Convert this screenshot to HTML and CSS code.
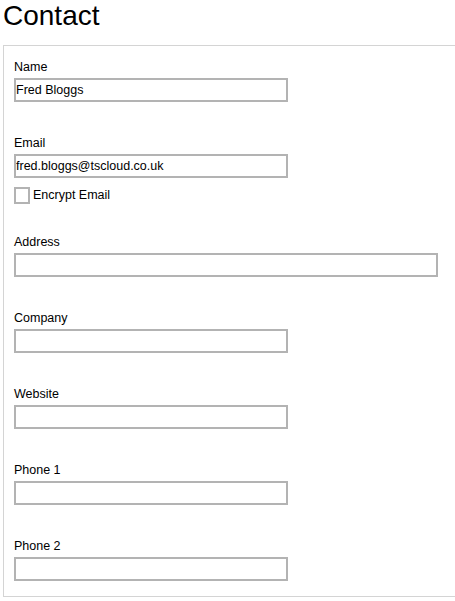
FILE: index.html
```html
<!DOCTYPE html>
<html lang="en">
  <head>
    <meta charset="UTF-8" />
    <meta name="viewport" content="width=device-width, initial-scale=1.0" />
    <title>Contact</title>
    <link rel="stylesheet" href="styles.css">
  </head>
  <body>
    <h1>Contact</h1>
    <form class="contact-box">
      <div class="field">
        <label for="name">Name</label>
        <input type="text" id="name" value="Fred Bloggs" />
      </div>

      <div class="field">
        <label for="email">Email</label>
        <input type="email" id="email" value="fred.bloggs@tscloud.co.uk" />
        <div class="check-row">
          <input type="checkbox" id="encrypt" />
          <label for="encrypt">Encrypt Email</label>
        </div>
      </div>

      <div class="field">
        <label for="address">Address</label>
        <input type="text" id="address" class="wide" />
      </div>

      <div class="field">
        <label for="company">Company</label>
        <input type="text" id="company" />
      </div>

      <div class="field">
        <label for="website">Website</label>
        <input type="text" id="website" />
      </div>

      <div class="field">
        <label for="phone1">Phone 1</label>
        <input type="text" id="phone1" />
      </div>

      <div class="field">
        <label for="phone2">Phone 2</label>
        <input type="text" id="phone2" />
      </div>
    </form>
  </body>
</html>
```

FILE: styles.css
```css
body {
  margin: 0;
  padding: 0 0 0 3px;
  font-family: "Liberation Sans", Arial, sans-serif;
  color: #000;
  background: #fff;
}
h1 {
  margin: 0 0 13px;
  font-size: 28px;
  font-weight: normal;
  line-height: 32px;
}
.contact-box {
  border: 1px solid #d4d4d4;
  border-right: none;
  padding: 12px 10px 15px;
}
.field {
  margin-bottom: 32px;
}
.field:last-child {
  margin-bottom: 0;
}
label {
  display: block;
  font-size: 12.5px;
  line-height: 15px;
  padding-top: 2px;
  margin-bottom: 3px;
}
input[type="text"],
input[type="email"] {
  display: block;
  box-sizing: border-box;
  width: 274px;
  height: 24px;
  margin: 0;
  padding: 0;
  border: 2px solid #b3b3b3;
  font-family: "Liberation Sans", Arial, sans-serif;
  font-size: 12.5px;
  color: #000;
  outline: none;
}
input.wide {
  width: 424px;
}
.check-row {
  display: flex;
  align-items: center;
  margin-top: 9px;
  height: 17px;
  margin-bottom: -3px;
}
.check-row input {
  appearance: none;
  -webkit-appearance: none;
  box-sizing: border-box;
  width: 16px;
  height: 17px;
  margin: 0 3px 0 0;
  border: 2px solid #b3b3b3;
  background: #fff;
}
.check-row label {
  margin: 0;
  padding: 0;
}
```
